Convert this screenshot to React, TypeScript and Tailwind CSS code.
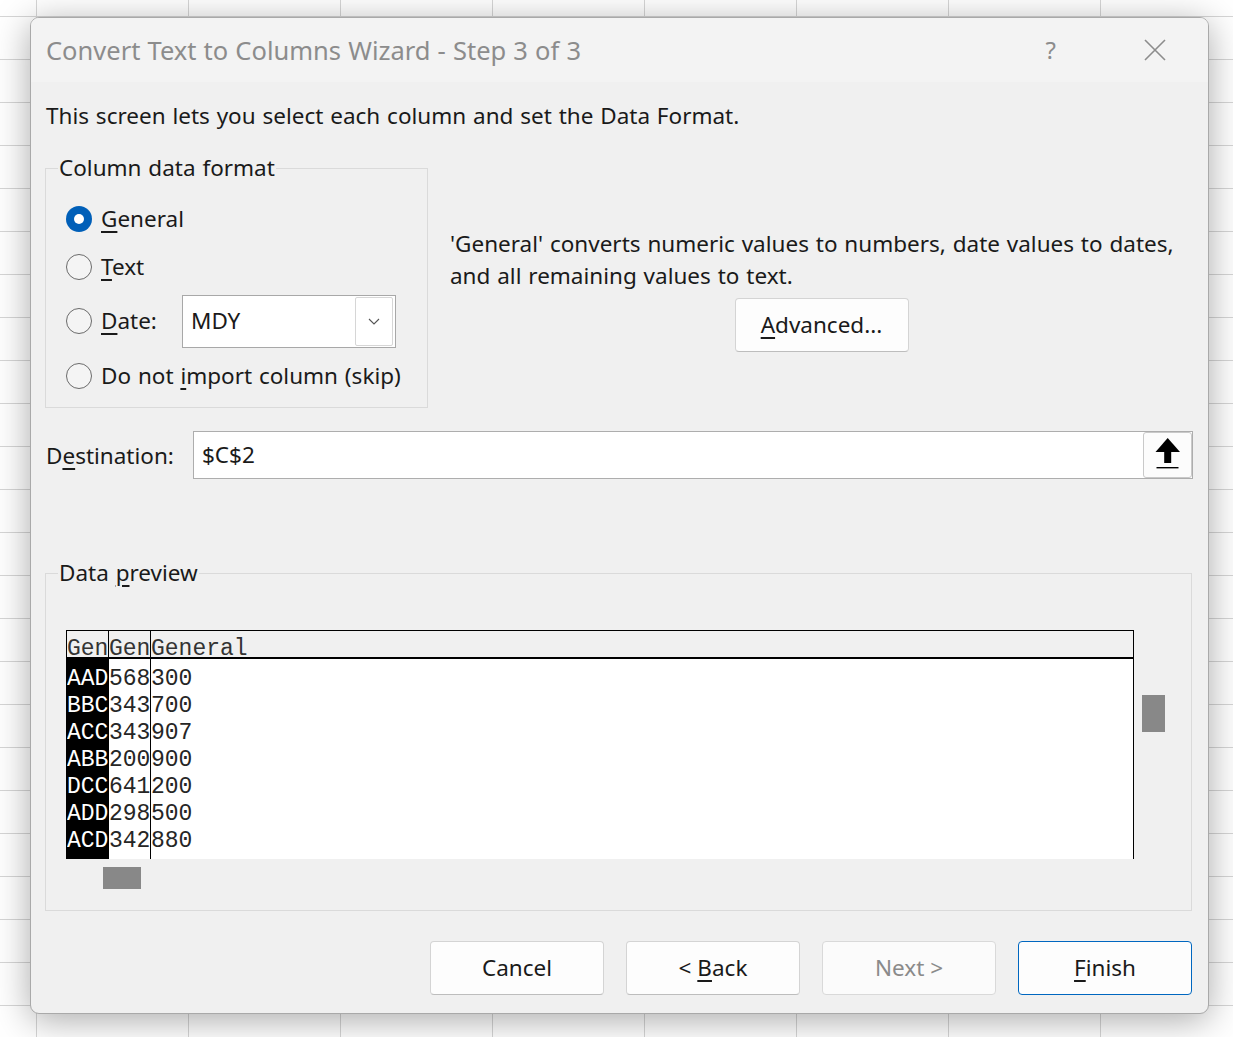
import React from "react";

const rows = [
  ["AAD", "568", "300"],
  ["BBC", "343", "700"],
  ["ACC", "343", "907"],
  ["ABB", "200", "900"],
  ["DCC", "641", "200"],
  ["ADD", "298", "500"],
  ["ACD", "342", "880"],
];

function Radio({ checked }: { checked?: boolean }) {
  if (checked) {
    return (
      <span className="flex h-[26px] w-[26px] shrink-0 items-center justify-center rounded-full bg-[#005fb8]">
        <span className="h-[10px] w-[10px] rounded-full bg-white" />
      </span>
    );
  }
  return <span className="h-[26px] w-[26px] shrink-0 rounded-full border-[1.5px] border-[#6b6b6b] bg-[#f4f4f4]" />;
}

function Btn({ children, primary, disabled }: { children: React.ReactNode; primary?: boolean; disabled?: boolean }) {
  return (
    <button
      className={
        primary
          ? "flex h-[54px] w-[174px] items-center justify-center rounded-[4px] border border-[#0067c0] bg-[#fdfdfd] text-[#1a1a1a]"
          : disabled
          ? "flex h-[54px] w-[174px] items-center justify-center rounded-[4px] border border-[#d9d9d9] bg-[#fbfbfb] text-[#8a8a8a]"
          : "flex h-[54px] w-[174px] items-center justify-center rounded-[4px] border border-[#d4d4d4] border-b-[#bdbdbd] bg-[#fdfdfd] text-[#1a1a1a]"
      }
    >
      <span>{children}</span>
    </button>
  );
}

const U = ({ children }: { children: React.ReactNode }) => (
  <span className="underline decoration-[1.5px] underline-offset-[4px]">{children}</span>
);

export default function App() {
  return (
    <div className="h-[1037px] w-[1233px] overflow-hidden bg-white bg-[linear-gradient(to_right,#d6d6d6_1px,transparent_1px),linear-gradient(to_bottom,#d6d6d6_1px,transparent_1px)] pl-[30px] pt-[17px] [background-position:36px_16px] [background-size:152px_43px]">
      <div className="w-[1179px] overflow-hidden rounded-[9px] border border-[#a9a9a9] bg-[#f0f0f0] font-['Noto_Sans',sans-serif] text-[22.5px] text-[#1a1a1a] shadow-[0_6px_36px_rgba(0,0,0,0.34)] [word-spacing:1px]">
        {/* title bar */}
        <div className="flex h-[64px] items-center justify-between bg-[#f3f3f3] pl-[15px] pr-[42px]">
          <span className="text-[25.5px] text-[#8c8c8c] [word-spacing:0.5px]">Convert Text to Columns Wizard - Step 3 of 3</span>
          <div className="flex items-center gap-[88px]">
            <span className="text-[24px] text-[#8c8c8c]">?</span>
            <svg width="22" height="22" viewBox="0 0 22 22" fill="none" stroke="#8c8c8c" strokeWidth="1.6">
              <path d="M1 1 L21 21 M21 1 L1 21" />
            </svg>
          </div>
        </div>

        <div className="flex flex-col pl-[15px] pr-[15px] pb-[18px]">
          <p className="mt-[19px] leading-[30px]">This screen lets you select each column and set the Data Format.</p>

          <div className="mt-[22px] flex">
            <fieldset className="-ml-[1px] w-[383px] border border-[#dadada] pb-[6px] pl-[20px]">
              <legend className="-ml-[8px] px-[1px] leading-[30px]">Column data format</legend>
              <div className="flex flex-col pt-[12px]">
                <label className="flex h-[48px] items-center gap-[9px]">
                  <Radio checked />
                  <span>
                    <U>G</U>eneral
                  </span>
                </label>
                <label className="flex h-[48px] items-center gap-[9px]">
                  <Radio />
                  <span>
                    <U>T</U>ext
                  </span>
                </label>
                <div className="flex h-[60px] items-center">
                  <label className="flex w-[116px] items-center gap-[9px]">
                    <Radio />
                    <span>
                      <U>D</U>ate:
                    </span>
                  </label>
                  <div className="flex h-[53px] w-[214px] items-center justify-between border border-[#a8a8a8] bg-white pl-[8px] pr-[2px]">
                    <span>MDY</span>
                    <span className="flex h-[49px] w-[38px] items-center justify-center rounded-[2px] border border-[#d6d6d6] bg-white">
                      <svg width="12" height="7" viewBox="0 0 12 7" fill="none" stroke="#555" strokeWidth="1.1">
                        <path d="M1 1 L6 6 L11 1" />
                      </svg>
                    </span>
                  </div>
                </div>
                <label className="flex h-[50px] items-center gap-[9px]">
                  <Radio />
                  <span>
                    Do not <U>i</U>mport column (skip)
                  </span>
                </label>
              </div>
            </fieldset>

            <div className="ml-[22px] flex flex-1 flex-col">
              <p className="mt-[75px] leading-[32px]">
                'General' converts numeric values to numbers, date values to dates,
                <br />
                and all remaining values to text.
              </p>
              <div className="mt-[6px] flex justify-center">
                <Btn>
                  <U>A</U>dvanced...
                </Btn>
              </div>
            </div>
          </div>

          <div className="mt-[23px] flex items-center">
            <span className="w-[147px] pt-[2px]">
              D<U>e</U>stination:
            </span>
            <div className="flex h-[48px] w-[1000px] items-center justify-between border border-[#adadad] bg-white pl-[8px]">
              <span>$C$2</span>
              <span className="flex h-[46px] w-[49px] items-center justify-center rounded-[3px] border border-[#c9c9c9] bg-[#fcfcfc]">
                <svg width="26" height="34" viewBox="0 0 26 34" fill="#000">
                  <polygon points="12.7,0 0.5,14 25,14" />
                  <rect x="9.2" y="12" width="7" height="13" />
                  <rect x="1.5" y="29" width="22" height="1.4" />
                </svg>
              </span>
            </div>
          </div>

          <fieldset className="-ml-[1px] mt-[79px] h-[353px] w-[1147px] border border-[#dadada] pl-[20px]">
            <legend className="-ml-[8px] px-[1px] leading-[30px]">
              Data <U>p</U>review
            </legend>
            <div className="mt-[42px] flex">
              <div className="flex flex-col">
                <div className="flex h-[229px] w-[1068px] border-l border-r border-t border-black font-['Liberation_Mono',monospace] text-[23px] [word-spacing:0px]">
                  {[0, 1, 2].map((c) => (
                    <div
                      key={c}
                      className={
                        c === 2
                          ? "flex min-w-0 flex-1 flex-col"
                          : "flex w-[42px] flex-col overflow-hidden border-r border-black"
                      }
                    >
                      <div className="h-[28px] whitespace-nowrap border-b-2 border-black bg-[#f0f0f0] pt-[11px] leading-[15px] text-[#333]">
                        {c === 2 ? "General" : "Gen"}
                      </div>
                      <div
                        className={
                          c === 0
                            ? "flex-1 overflow-hidden whitespace-nowrap bg-black pt-[7px] leading-[27px] text-white"
                            : "flex-1 overflow-hidden whitespace-nowrap bg-white pt-[7px] leading-[27px] text-[#262626]"
                        }
                      >
                        {rows.map((r) => (
                          <div key={r[0] + r[1]}>{r[c]}</div>
                        ))}
                      </div>
                    </div>
                  ))}
                </div>
                <div className="ml-[37px] mt-[8px] h-[22px] w-[38px] bg-[#888888]" />
              </div>
              <div className="ml-[8px] mt-[65px] h-[37px] w-[23px] bg-[#888888]" />
            </div>
          </fieldset>

          <div className="mt-[30px] flex justify-end gap-[22px] pr-[1px]">
            <Btn>Cancel</Btn>
            <Btn>
              &lt; <U>B</U>ack
            </Btn>
            <Btn disabled>Next &gt;</Btn>
            <Btn primary>
              <U>F</U>inish
            </Btn>
          </div>
        </div>
      </div>
    </div>
  );
}
